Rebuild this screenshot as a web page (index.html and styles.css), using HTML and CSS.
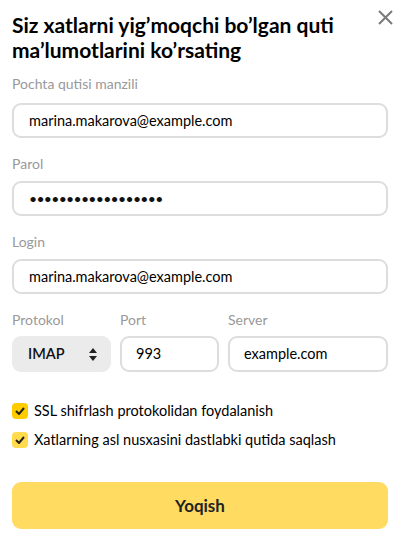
FILE: index.html
```html
<!DOCTYPE html>
<html>
<head>
<meta charset="utf-8">
<link rel="stylesheet" href="styles.css">
</head>
<body>
<div class="modal">
  <button class="close" aria-label="close">
    <svg width="15" height="15" viewBox="0 0 15 15"><path d="M1 1L14 14M14 1L1 14" stroke="#7a7a7a" stroke-width="2" fill="none"/></svg>
  </button>
  <h1 class="title">Siz xatlarni yig’moqchi bo’lgan quti ma’lumotlarini ko’rsating</h1>

  <div class="field">
    <div class="label">Pochta qutisi manzili</div>
    <div class="input">marina.makarova@example.com</div>
  </div>
  <div class="field">
    <div class="label">Parol</div>
    <div class="input pass">••••••••••••••••••</div>
  </div>
  <div class="field">
    <div class="label">Login</div>
    <div class="input">marina.makarova@example.com</div>
  </div>

  <div class="row">
    <div class="col col-proto">
      <div class="label">Protokol</div>
      <div class="select">IMAP
        <svg class="arrows" width="8" height="13" viewBox="0 0 8 13"><path d="M4 0L8 5H0Z M4 13L0 8H8Z" fill="#222"/></svg>
      </div>
    </div>
    <div class="col col-port">
      <div class="label">Port</div>
      <div class="input">993</div>
    </div>
    <div class="col col-server">
      <div class="label">Server</div>
      <div class="input">example.com</div>
    </div>
  </div>

  <div class="checks">
    <label class="check"><span class="box box-active"><svg width="10" height="8" viewBox="0 0 10 8"><path d="M1 4L4 7L9 1" stroke="#222" stroke-width="2" fill="none"/></svg></span>SSL shifrlash protokolidan foydalanish</label>
    <label class="check"><span class="box"><svg width="10" height="8" viewBox="0 0 10 8"><path d="M1 4L4 7L9 1" stroke="#222" stroke-width="2" fill="none"/></svg></span>Xatlarning asl nusxasini dastlabki qutida saqlash</label>
  </div>

  <button class="submit">Yoqish</button>
</div>
</body>
</html>
```

FILE: styles.css
```css
html, body {
  margin: 0;
  padding: 0;
  background: #fff;
}
body {
  font-family: Lato, "Open Sans", sans-serif;
  color: #000;
  width: 403px;
  height: 544px;
  overflow: hidden;
}
.modal {
  position: relative;
  padding: 12px 15px 0 12px;
}
.close {
  position: absolute;
  top: 10px;
  right: 10px;
  padding: 0;
  border: 0;
  background: none;
  width: 15px;
  height: 15px;
  line-height: 0;
}
.title {
  margin: 0;
  font-size: 21px;
  font-weight: 700;
  line-height: 25px;
  color: #000;
  padding-right: 40px;
}
.field {
  margin-top: 13px;
}
.field + .field {
  margin-top: 17px;
}
.label {
  font-size: 14px;
  line-height: 18px;
  color: #999;
  margin-bottom: 10px;
}
.field + .field .label {
  margin-bottom: 8px;
}
.input {
  box-sizing: border-box;
  height: 35px;
  border: 2px solid #ddd;
  border-radius: 9px;
  padding: 0 0 0 15px;
  font-size: 14.5px;
  line-height: 31px;
  color: #000;
  white-space: nowrap;
  overflow: hidden;
}
.pass {
  font-size: 14px;
  letter-spacing: -0.7px;
  color: #111;
}
.row {
  display: flex;
  gap: 9px;
  margin-top: 17px;
}
.row .label {
  margin-bottom: 7px;
}
.col-proto { width: 99px; }
.col-port { width: 99px; }
.col-server { flex: 1; }
.select {
  box-sizing: border-box;
  height: 36px;
  background: #ebebeb;
  border-radius: 9px;
  padding: 0 0 0 16px;
  font-size: 14.5px;
  font-weight: 600;
  line-height: 36px;
  display: flex;
  align-items: center;
  justify-content: space-between;
  padding-right: 14px;
  color: #111;
}
.row .input {
  height: 36px;
  line-height: 32px;
  padding-left: 14px;
}
.checks {
  margin-top: 30px;
  display: flex;
  flex-direction: column;
  gap: 12px;
}
.check {
  display: flex;
  align-items: center;
  gap: 6px;
  font-size: 14.5px;
  line-height: 17px;
  color: #000;
}
.box {
  width: 16px;
  height: 16px;
  border-radius: 4px;
  background: #ffdb4d;
  display: flex;
  align-items: center;
  justify-content: center;
}
.box-active {
  background: #fc0;
}
.submit {
  display: block;
  width: 100%;
  margin-top: 34px;
  height: 47px;
  border: 0;
  border-radius: 9px;
  background: #ffdb62;
  font-family: inherit;
  font-size: 17px;
  font-weight: 700;
  color: #222;
}
```
